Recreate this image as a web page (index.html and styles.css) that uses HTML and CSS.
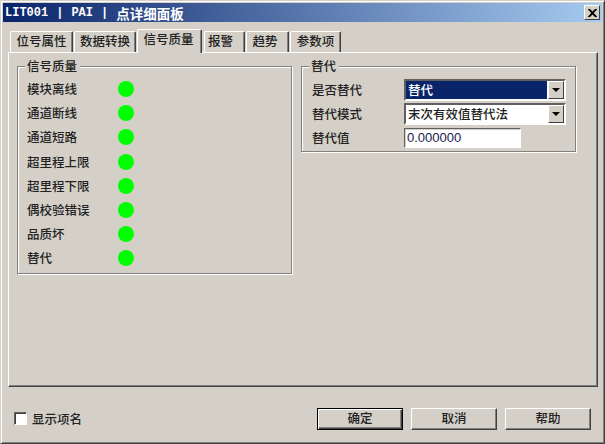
FILE: index.html
```html
<!DOCTYPE html>
<html lang="zh">
<head>
<meta charset="utf-8">
<title>点详细面板</title>
<link rel="stylesheet" href="styles.css">
</head>
<body>
<div class="window">
  <div class="titlebar">
    <div class="title"><span>LIT001</span><span>|</span><span>PAI</span><span>|</span><span class="title-cjk">点详细面板</span></div>
    <div class="close"><svg width="9" height="8" viewBox="0 0 9 8"><path d="M0 0h2l2.500 2.500L7 0h2v0.500L5.700 4 9 7.500V8H7L4.500 5.500 2 8H0v-0.500L3.300 4 0 0.500z" fill="#000"/></svg></div>
  </div>
  <div class="tabs">
    <div class="tab t1">位号属性</div>
    <div class="tab t2">数据转换</div>
    <div class="tab active">信号质量</div>
    <div class="tab t4">报警</div>
    <div class="tab t5">趋势</div>
    <div class="tab t6">参数项</div>
  </div>
  <div class="panel">
    <section class="group quality">
      <div class="legend">信号质量</div>
      <div class="row"><span class="row-label">模块离线</span><i class="led"></i></div>
      <div class="row"><span class="row-label">通道断线</span><i class="led"></i></div>
      <div class="row"><span class="row-label">通道短路</span><i class="led"></i></div>
      <div class="row"><span class="row-label">超里程上限</span><i class="led"></i></div>
      <div class="row"><span class="row-label">超里程下限</span><i class="led"></i></div>
      <div class="row"><span class="row-label">偶校验错误</span><i class="led"></i></div>
      <div class="row"><span class="row-label">品质坏</span><i class="led"></i></div>
      <div class="row"><span class="row-label">替代</span><i class="led"></i></div>
    </section>
    <section class="group subst">
      <div class="legend">替代</div>
      <div class="field">
        <span class="field-label">是否替代</span>
        <div class="select"><span class="value selected">替代</span><span class="arrow"></span></div>
      </div>
      <div class="field">
        <span class="field-label">替代模式</span>
        <div class="select"><span class="value">末次有效值替代法</span><span class="arrow"></span></div>
      </div>
      <div class="field">
        <span class="field-label">替代值</span>
        <div class="textbox">0.000000</div>
      </div>
    </section>
  </div>
  <div class="footer">
    <label class="check"><span class="box"></span>显示项名</label>
    <div class="buttons">
      <div class="btn default">确定</div>
      <div class="btn">取消</div>
      <div class="btn">帮助</div>
    </div>
  </div>
</div>
</body>
</html>
```
FILE: styles.css
```css
* { box-sizing: border-box; }
html, body { margin: 0; padding: 0; }
body {
  width: 605px;
  height: 444px;
  overflow: hidden;
  background: #d4d0c8;
  font-family: "Noto Sans CJK SC", "Liberation Sans", sans-serif;
  font-size: 12.5px;
  font-weight: 500;
  color: #222;
}
.window {
  width: 605px;
  height: 444px;
  padding: 2px 1px 1px 2px;
  border: 1px solid;
  border-color: #d4d0c8 #404040 #404040 #d4d0c8;
  box-shadow: inset 1px 1px 0 #fff, inset -1px -1px 0 #808080;
  display: flex;
  flex-direction: column;
}
.titlebar {
  height: 19px;
  margin-right: 1px;
  background: linear-gradient(90deg, #0a246a, #a6caf0);
  display: flex;
  align-items: center;
  justify-content: space-between;
  padding: 0 2px 0 2px;
  flex: none;
}
.title {
  display: flex;
  gap: 8px;
  align-items: center;
  color: #fff;
  font: bold 12px "Liberation Mono", monospace;
}
.title-cjk {
  font: bold 13.500px "Noto Sans CJK SC", sans-serif;
}
.close {
  width: 16px;
  height: 15px;
  background: #d4d0c8;
  border: 1px solid;
  border-color: #fff #404040 #404040 #fff;
  display: flex;
  align-items: center;
  justify-content: center;
}
.tabs {
  display: flex;
  align-items: flex-end;
  height: 30px;
  padding-left: 7px;
  flex: none;
}
.tab {
  height: 21px;
  text-align: center;
  line-height: 18px;
  background: #d4d0c8;
  border: 1px solid;
  border-bottom: 0;
  border-radius: 2px 2px 0 0;
  border-color: #fff #404040 #fff #fff;
  box-shadow: inset -1px 0 0 #808080;
  margin-right: 1px;
}
.t1 { width: 63px; }
.t2 { width: 62px; }
.t4 { width: 41px; padding-right: 8px; }
.t5 { width: 43px; padding-right: 5px; }
.t6 { width: 51px; }
.active {
  position: relative;
  z-index: 1;
  width: 65px;
  height: 24px;
  line-height: 18px;
  margin-bottom: -1px;
  margin-right: 2px;
  padding-right: 2px;
}
.panel {
  margin: 0 5px 0 5px;
  height: 335px;
  flex: none;
  border: 1px solid;
  border-color: #fff #404040 #404040 #fff;
  box-shadow: inset -1px -1px 0 #808080;
  padding: 13px 20px 0 8px;
  display: flex;
  gap: 9px;
  align-items: flex-start;
}
.group {
  position: relative;
  width: 275px;
  border: 1px solid #808080;
  box-shadow: 1px 1px 0 #fff, inset 1px 1px 0 #fff;
}
.quality { height: 208px; padding: 10px 0 0 9px; }
.subst { height: 86px; padding: 11px 0 0 10px; }
.legend {
  position: absolute;
  top: -8px;
  left: 7px;
  padding: 0 3px 0 2px;
  line-height: 14px;
  background: #d4d0c8;
}
.row {
  display: flex;
  align-items: center;
  height: 24.200px;
}
.row-label { width: 91px; padding-bottom: 1px; }
.led {
  width: 16px;
  height: 16px;
  border-radius: 50%;
  background: #00ff00;
}
.field {
  display: flex;
  align-items: center;
  height: 24px;
}
.field-label { width: 92px; padding-bottom: 2px; }
.select {
  width: 162px;
  height: 22px;
  display: flex;
  align-items: stretch;
  background: #fff;
  border: 2px solid;
  border-color: #606060 #fff #fff #606060;
}
.value {
  flex: 1;
  line-height: 18px;
  padding-left: 2px;
}
.selected {
  background: #0a246a;
  color: #fff;
  margin: 0 1px 0 0;
}
.arrow {
  position: relative;
  width: 16px;
  background: #d4d0c8;
  border: 1px solid;
  border-color: #fff #404040 #404040 #fff;
}
.arrow::after {
  content: "";
  position: absolute;
  left: 3px;
  top: 6px;
  border: 4px solid transparent;
  border-top: 4px solid #000;
  border-bottom: 0;
}
.textbox {
  width: 117px;
  height: 20px;
  background: #fff;
  border: 1px solid;
  border-color: #606060 #fff #fff #606060;
  box-shadow: inset 1px 1px 0 #d4d0c8;
  padding-left: 2px;
  font: 13px/18px "Liberation Sans", sans-serif;
  color: #202050;
}
.footer {
  flex: 1;
  display: flex;
  align-items: flex-start;
  justify-content: space-between;
  padding: 21px 12px 0 11px;
}
.check {
  display: flex;
  align-items: center;
  gap: 5px;
  margin-top: 3px;
  height: 15px;
}
.box {
  width: 13px;
  height: 13px;
  background: #fff;
  border: 1px solid;
  border-color: #606060 #fff #fff #606060;
  box-shadow: inset 1px 1px 0 #404040;
}
.buttons { display: flex; gap: 8px; }
.btn {
  width: 86px;
  height: 22px;
  text-align: center;
  line-height: 18px;
  background: #d4d0c8;
  border: 1px solid;
  border-color: #fff #404040 #404040 #fff;
  box-shadow: inset -1px -1px 0 #808080;
}
.default {
  border: 1px solid #000;
  box-shadow: inset 1px 1px 0 #fff, inset -1px -1px 0 #404040, inset -2px -2px 0 #808080;
}
```
